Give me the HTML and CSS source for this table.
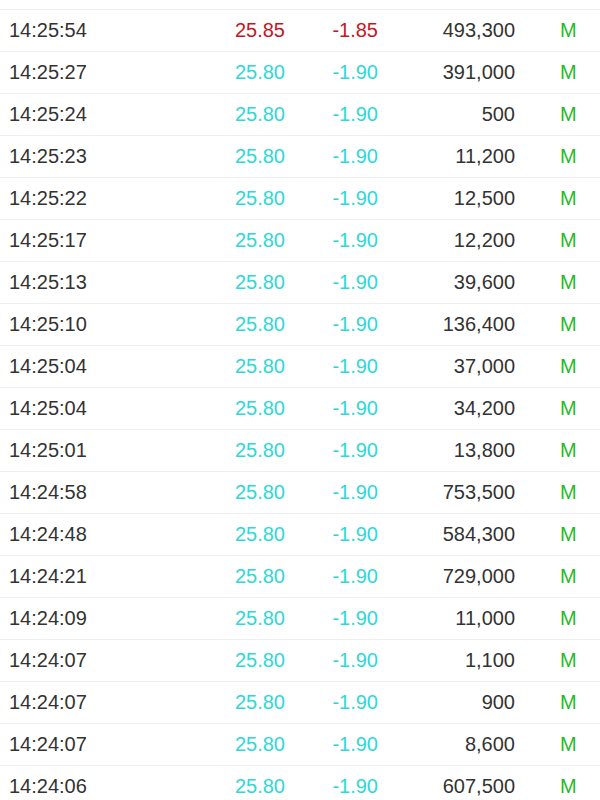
FILE: index.html
```html
<!DOCTYPE html>
<html>
<head>
<meta charset="utf-8">
<link rel="stylesheet" href="styles.css">
</head>
<body>
<div class="list">
  <div class="row"><span class="time">14:25:54</span><span class="num up">25.85</span><span class="num up">-1.85</span><span class="num vol">493,300</span><span class="flag">M</span></div>
  <div class="row"><span class="time">14:25:27</span><span class="num dn">25.80</span><span class="num dn">-1.90</span><span class="num vol">391,000</span><span class="flag">M</span></div>
  <div class="row"><span class="time">14:25:24</span><span class="num dn">25.80</span><span class="num dn">-1.90</span><span class="num vol">500</span><span class="flag">M</span></div>
  <div class="row"><span class="time">14:25:23</span><span class="num dn">25.80</span><span class="num dn">-1.90</span><span class="num vol">11,200</span><span class="flag">M</span></div>
  <div class="row"><span class="time">14:25:22</span><span class="num dn">25.80</span><span class="num dn">-1.90</span><span class="num vol">12,500</span><span class="flag">M</span></div>
  <div class="row"><span class="time">14:25:17</span><span class="num dn">25.80</span><span class="num dn">-1.90</span><span class="num vol">12,200</span><span class="flag">M</span></div>
  <div class="row"><span class="time">14:25:13</span><span class="num dn">25.80</span><span class="num dn">-1.90</span><span class="num vol">39,600</span><span class="flag">M</span></div>
  <div class="row"><span class="time">14:25:10</span><span class="num dn">25.80</span><span class="num dn">-1.90</span><span class="num vol">136,400</span><span class="flag">M</span></div>
  <div class="row"><span class="time">14:25:04</span><span class="num dn">25.80</span><span class="num dn">-1.90</span><span class="num vol">37,000</span><span class="flag">M</span></div>
  <div class="row"><span class="time">14:25:04</span><span class="num dn">25.80</span><span class="num dn">-1.90</span><span class="num vol">34,200</span><span class="flag">M</span></div>
  <div class="row"><span class="time">14:25:01</span><span class="num dn">25.80</span><span class="num dn">-1.90</span><span class="num vol">13,800</span><span class="flag">M</span></div>
  <div class="row"><span class="time">14:24:58</span><span class="num dn">25.80</span><span class="num dn">-1.90</span><span class="num vol">753,500</span><span class="flag">M</span></div>
  <div class="row"><span class="time">14:24:48</span><span class="num dn">25.80</span><span class="num dn">-1.90</span><span class="num vol">584,300</span><span class="flag">M</span></div>
  <div class="row"><span class="time">14:24:21</span><span class="num dn">25.80</span><span class="num dn">-1.90</span><span class="num vol">729,000</span><span class="flag">M</span></div>
  <div class="row"><span class="time">14:24:09</span><span class="num dn">25.80</span><span class="num dn">-1.90</span><span class="num vol">11,000</span><span class="flag">M</span></div>
  <div class="row"><span class="time">14:24:07</span><span class="num dn">25.80</span><span class="num dn">-1.90</span><span class="num vol">1,100</span><span class="flag">M</span></div>
  <div class="row"><span class="time">14:24:07</span><span class="num dn">25.80</span><span class="num dn">-1.90</span><span class="num vol">900</span><span class="flag">M</span></div>
  <div class="row"><span class="time">14:24:07</span><span class="num dn">25.80</span><span class="num dn">-1.90</span><span class="num vol">8,600</span><span class="flag">M</span></div>
  <div class="row"><span class="time">14:24:06</span><span class="num dn">25.80</span><span class="num dn">-1.90</span><span class="num vol">607,500</span><span class="flag">M</span></div>
</div>
</body>
</html>
```
FILE: styles.css
```css
html, body {
  margin: 0;
  padding: 0;
  background: #ffffff;
  overflow: hidden;
}
body {
  font-family: "Liberation Sans", Arial, sans-serif;
  font-size: 20px;
  color: #333333;
}
.list {
  padding-top: 9px;
}
.row {
  display: grid;
  grid-template-columns: 200px 76px 93px 137px 1fr;
  padding-left: 9px;
  height: 41px;
  line-height: 41px;
  border-top: 1px solid #efefef;
}
.num {
  text-align: right;
}
.up {
  color: #c5161f;
}
.dn {
  color: #2fd8d5;
}
.vol {
  color: #333333;
}
.flag {
  color: #1fbb2a;
  padding-left: 45px;
}
```
